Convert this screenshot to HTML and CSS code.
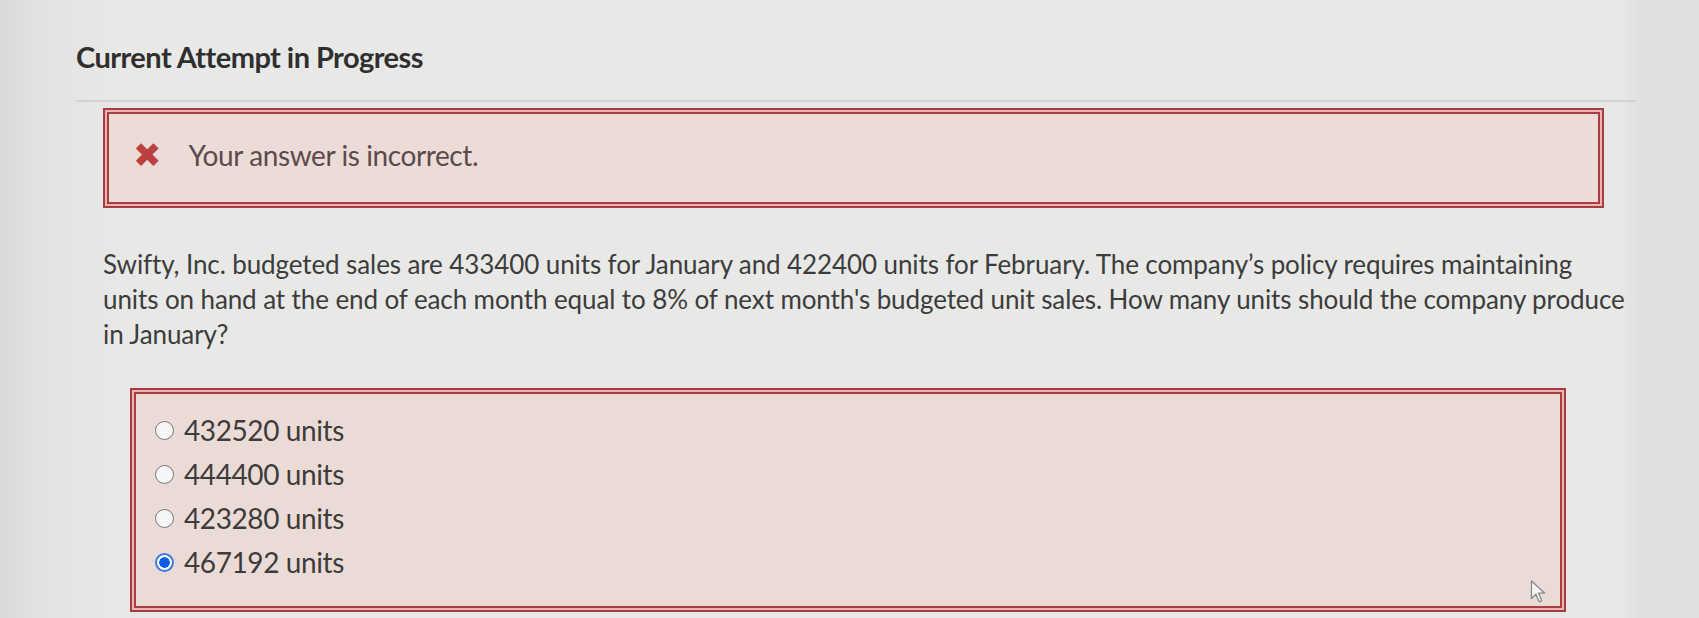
FILE: index.html
```html
<!DOCTYPE html>
<html lang="en">
<head>
<meta charset="utf-8">
<title>Current Attempt in Progress</title>
<link rel="stylesheet" href="styles.css">
</head>
<body>
<div class="page">
  <h1 class="title">Current Attempt in Progress</h1>
  <div class="rule"></div>
  <div class="feedback">
    <span class="x-icon">&#10006;</span>
    <span class="feedback-text">Your answer is incorrect.</span>
  </div>
  <p class="question">Swifty, Inc. budgeted sales are 433400 units for January and 422400 units for February. The company’s policy requires maintaining units on hand at the end of each month equal to 8% of next month's budgeted unit sales. How many units should the company produce in January?</p>
  <div class="answers">
    <label class="opt"><span class="radio"></span><span>432520 units</span></label>
    <label class="opt"><span class="radio"></span><span>444400 units</span></label>
    <label class="opt"><span class="radio"></span><span>423280 units</span></label>
    <label class="opt"><span class="radio checked"></span><span>467192 units</span></label>
    <svg class="cursor" width="16" height="24" viewBox="0 0 14 22"><path d="M1 1 L1 17 L5 13 L8 20 L10.5 19 L7.5 12 L13 12 Z" fill="#f4f4f4" stroke="#8a8a8a" stroke-width="1.2" stroke-linejoin="round"/></svg>
  </div>
</div>
</body>
</html>
```
FILE: styles.css
```css
html, body {
  margin: 0;
  padding: 0;
}
body {
  width: 1699px;
  height: 618px;
  overflow: hidden;
  font-family: Lato, "Open Sans", "Liberation Sans", sans-serif;
  background: linear-gradient(to right, #d9dad7 0px, #e3e4e1 45px, #e8e9e6 120px, #e8e9e6 1620px, #e0e1de 1640px, #dfe0dd 1699px);
  color: #3a3a3a;
}
.page {
  position: relative;
  padding: 40px 0 0 76px;
}
.title {
  margin: 0;
  font-size: 29px;
  line-height: 34px;
  font-weight: 700;
  color: #2f2f2f;
  letter-spacing: -0.55px;
}
.rule {
  margin-top: 26px;
  width: 1560px;
  height: 2px;
  background: #d2d3d0;
}
.feedback {
  margin: 6px 0 0 27px;
  width: 1501px;
  height: 100px;
  box-sizing: border-box;
  border: 2px solid #a63d42;
  box-shadow: inset 0 0 0 2px #eeb3b1, inset 0 0 0 4px #a63d42;
  background: #ecdcd8;
  display: flex;
  align-items: center;
  padding-left: 28px;
  gap: 27px;
}
.x-icon {
  color: #bb4141;
  font-family: "DejaVu Sans", sans-serif;
  font-size: 34px;
  line-height: 1;
  position: relative;
  top: -3px;
}
.feedback-text {
  font-size: 28px;
  letter-spacing: -0.4px;
  color: #5c4a4d;
  position: relative;
  top: -3px;
}
.question {
  margin: 39px 0 0 27px;
  width: 1527px;
  font-size: 26px;
  letter-spacing: -0.1px;
  line-height: 35px;
  color: #3c3c3c;
}
.answers {
  position: relative;
  margin: 36px 0 0 54px;
  width: 1436px;
  height: 224px;
  box-sizing: border-box;
  border: 2px solid #a63d42;
  box-shadow: inset 0 0 0 2px #eeb3b1, inset 0 0 0 4px #a63d42;
  background: #ebdbd6;
  padding: 23px 0 0 23px;
  display: flex;
  flex-direction: column;
  gap: 10px;
}
.opt {
  display: flex;
  align-items: center;
  gap: 10px;
  height: 34px;
  font-size: 28px;
  letter-spacing: -0.4px;
  color: #3e3b3b;
}
.radio {
  width: 19px;
  height: 19px;
  flex: none;
  box-sizing: border-box;
  border-radius: 50%;
  border: 1.5px solid #7a7776;
  background: #f6f6f6;
}
.radio.checked {
  border: 2px solid #3a7be6;
  background: radial-gradient(circle, #0b5fe0 0 5px, #ffffff 5.5px);
}
.cursor {
  position: absolute;
  left: 1398px;
  top: 190px;
}
```
